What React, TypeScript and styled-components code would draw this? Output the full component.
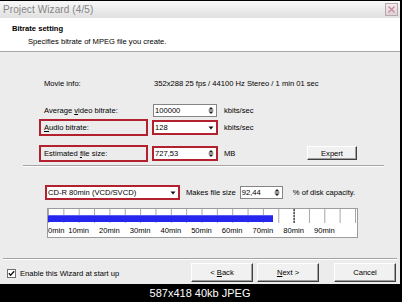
import React from 'react';
import styled, { createGlobalStyle } from 'styled-components';

const Global = createGlobalStyle`
  html, body { margin: 0; padding: 0; background: #000; }
  body {
    width: 402px;
    height: 302px;
    overflow: hidden;
    font-family: "Liberation Sans", Arial, sans-serif;
    font-size: 7.6px;
    color: #000;
  }
`;

const Page = styled.div`
  width: 402px;
  height: 302px;
  display: flex;
  flex-direction: column;
  background: #000;
`;

const Window = styled.div`
  width: 400px;
  height: 283px;
  margin-top: 1px;
  background: #ececec;
  display: flex;
  flex-direction: column;
  overflow: hidden;
`;

const TitleBar = styled.div`
  height: 17px;
  flex: none;
  display: flex;
  align-items: center;
  justify-content: space-between;
  padding: 0 2px 0 3px;
  background: linear-gradient(#f8f8f8, #e0e0e0);
  font-size: 10px;
  color: #858585;
  letter-spacing: 0.1px;
`;

const CloseBox = styled.div`
  width: 13px;
  height: 13px;
  display: flex;
`;

const Header = styled.div`
  height: 33px;
  flex: none;
  background: #fff;
  border-bottom: 1px solid #a6a6a6;
  padding: 0 0 0 12px;
  box-sizing: content-box;
  display: flex;
  flex-direction: column;
`;

const HeaderTitle = styled.div`
  font-weight: bold;
  line-height: 9px;
  margin-top: 6px;
`;

const HeaderSub = styled.div`
  line-height: 9px;
  margin-top: 4px;
  padding-left: 16px;
`;

const Body = styled.div`
  flex: 1;
  display: flex;
  flex-direction: column;
`;

const Row = styled.div<{ $mt: number }>`
  display: grid;
  grid-template-columns: 105px 71px 90px 50px;
  align-items: center;
  height: 13px;
  padding-left: 41px;
  margin-top: ${p => p.$mt}px;
`;

const Label = styled.div<{ $hl?: boolean }>`
  height: 13px;
  line-height: 13px;
  padding-left: 3px;
  outline: ${p => (p.$hl ? '2px solid #b3202e' : 'none')};
  white-space: nowrap;
`;

const InfoValue = styled.div`
  grid-column: 2 / span 3;
  padding-left: 8px;
  white-space: nowrap;
`;

const Field = styled.div<{ $w: number; $hl?: boolean }>`
  width: ${p => p.$w}px;
  height: 13px;
  box-sizing: border-box;
  border: 1px solid #858585;
  background: #fff;
  display: flex;
  align-items: center;
  justify-content: space-between;
  padding: 0 2px 0 1px;
  justify-self: end;
  outline: ${p => (p.$hl ? '2px solid #b3202e' : 'none')};
  outline-offset: ${p => (p.$hl ? '-1px' : '0')};
  white-space: nowrap;
`;

const Unit = styled.div`
  padding-left: 7px;
  white-space: nowrap;
`;

const Button = styled.div<{ $w: number; $h: number }>`
  width: ${p => p.$w}px;
  height: ${p => p.$h}px;
  box-sizing: border-box;
  background: #f1f1f1;
  border-top: 1px solid #ffffff;
  border-left: 1px solid #ffffff;
  border-right: 1px solid #404040;
  border-bottom: 1px solid #404040;
  box-shadow: inset -1px -1px 0 #a0a0a0;
  display: flex;
  align-items: center;
  justify-content: center;
  white-space: pre;
`;

const Etched = styled.div<{ $mt: number; $ml: number; $mr: number }>`
  height: 0;
  border-top: 1px solid #a3a3a3;
  border-bottom: 1px solid #ffffff;
  margin: ${p => p.$mt}px ${p => p.$mr}px 0 ${p => p.$ml}px;
`;

const DiskRow = styled.div`
  display: flex;
  align-items: center;
  height: 13px;
  margin-top: 19px;
  padding-left: 46px;
`;

const MakesLabel = styled.span`
  margin: 0 4px 0 7px;
  white-space: nowrap;
`;

const Percent = styled.span`
  margin-left: 10px;
  white-space: nowrap;
`;

const Timeline = styled.div`
  width: 311px;
  height: 30px;
  box-sizing: border-box;
  margin: 9px 0 0 47px;
  border: 1px solid #9c9c9c;
  background: #fff;
  display: flex;
  flex-direction: column;
`;

const Ruler = styled.svg`
  display: block;
  flex: none;
`;

const TickLabels = styled.div`
  position: relative;
  height: 13px;
`;

const TickLabel = styled.span<{ $first: boolean }>`
  position: absolute;
  top: 0;
  line-height: 13px;
  white-space: nowrap;
  transform: ${p => (p.$first ? 'none' : 'translateX(-50%)')};
`;

const Footer = styled.div`
  display: flex;
  align-items: center;
  margin-top: 3px;
  padding: 0 4px 0 7px;
`;

const Check = styled.div`
  width: 9px;
  height: 9px;
  box-sizing: border-box;
  border: 1px solid #6e6e6e;
  background: #fff;
  display: flex;
  align-items: center;
  justify-content: center;
  margin-top: 2px;
`;

const CheckText = styled.span`
  margin-left: 4px;
  margin-top: 2px;
  white-space: nowrap;
`;

const ButtonGroup = styled.div`
  margin-left: auto;
  display: flex;
  gap: 4px;
`;

const CancelWrap = styled.div`
  margin-left: 11px;
`;

const Caption = styled.div`
  flex: 1;
  width: 400px;
  color: #fff;
  font-size: 11px;
  line-height: 18px;
  text-align: center;
`;

const Spin = () => (
  <svg width="6" height="9" viewBox="0 0 6 9">
    <polygon points="0.5,3.5 3,1 5.5,3.5" fill="#222" />
    <line x1="0.5" y1="4.5" x2="5.5" y2="4.5" stroke="#999" strokeWidth="1" />
    <polygon points="0.5,5.5 3,8 5.5,5.5" fill="#222" />
  </svg>
);

const Drop = () => (
  <svg width="6" height="4" viewBox="0 0 6 4">
    <polygon points="0.5,0.5 5.5,0.5 3,3.5" fill="#111" />
  </svg>
);

const CloseIcon = () => (
  <svg width="13" height="13" viewBox="0 0 13 13">
    <defs>
      <linearGradient id="cg" x1="0" y1="0" x2="0" y2="1">
        <stop offset="0" stopColor="#f4eef0" />
        <stop offset="1" stopColor="#dcd0d4" />
      </linearGradient>
    </defs>
    <rect x="0.5" y="0.5" width="12" height="12" fill="url(#cg)" stroke="#b9a7ad" />
    <path d="M3.5 3.5 L9.5 9.5 M9.5 3.5 L3.5 9.5" stroke="#c88a9a" strokeWidth="1.4" />
  </svg>
);

const U = styled.span`
  text-decoration: underline;
`;

const STEP = 15.35;

export default function App() {
  const ticks = Array.from({ length: 21 }, (_, i) => i);
  const labels = Array.from({ length: 10 }, (_, i) => i);
  return (
    <Page>
      <Global />
      <Window>
        <TitleBar>
          <span>Project Wizard (4/5)</span>
          <CloseBox>
            <CloseIcon />
          </CloseBox>
        </TitleBar>
        <Header>
          <HeaderTitle>Bitrate setting</HeaderTitle>
          <HeaderSub>Specifies bitrate of MPEG file you create.</HeaderSub>
        </Header>
        <Body>
          <Row $mt={25}>
            <Label>Movie info:</Label>
            <InfoValue>352x288 25 fps / 44100 Hz Stereo / 1 min 01 sec</InfoValue>
          </Row>
          <Row $mt={14}>
            <Label>
              Average <U>v</U>ideo bitrate:
            </Label>
            <Field $w={64}>
              <span>100000</span>
              <Spin />
            </Field>
            <Unit>kbits/sec</Unit>
          </Row>
          <Row $mt={4}>
            <Label $hl>
              <U>A</U>udio bitrate:
            </Label>
            <Field $w={64} $hl>
              <span>128</span>
              <Drop />
            </Field>
            <Unit>kbits/sec</Unit>
          </Row>
          <Row $mt={12}>
            <Label $hl>
              Estimated <U>f</U>ile size:
            </Label>
            <Field $w={64} $hl>
              <span>727,53</span>
              <Spin />
            </Field>
            <Unit>MB</Unit>
            <Button $w={50} $h={14}>Expert</Button>
          </Row>
          <Etched $mt={6} $ml={23} $mr={16} />
          <DiskRow>
            <Field $w={133} $hl>
              <span>CD-R 80min (VCD/SVCD)</span>
              <Drop />
            </Field>
            <MakesLabel>Makes file size</MakesLabel>
            <Field $w={43}>
              <span>92,44</span>
              <Spin />
            </Field>
            <Percent>% of disk capacity.</Percent>
          </DiskRow>
          <Timeline>
            <Ruler width="309" height="15" viewBox="0 0 309 15">
              {ticks.map(i => (
                <line
                  key={i}
                  x1={i * STEP + 0.5}
                  y1="0"
                  x2={i * STEP + 0.5}
                  y2="14"
                  stroke="#a8a8a8"
                  strokeWidth="1"
                />
              ))}
              <rect x="0" y="6" width="225" height="7" fill="#2626ee" />
              <rect x="0" y="6" width="225" height="1" fill="#5a5af5" />
              <line
                x1={16 * STEP + 0.5}
                y1="0"
                x2={16 * STEP + 0.5}
                y2="16"
                stroke="#111"
                strokeWidth="1"
                strokeDasharray="2 1"
              />
            </Ruler>
            <TickLabels>
              {labels.map(i => (
                <TickLabel key={i} $first={i === 0} style={{ left: `${i * STEP * 2}px` }}>
                  {i * 10}min
                </TickLabel>
              ))}
            </TickLabels>
          </Timeline>
          <Etched $mt={20} $ml={3} $mr={3} />
          <Footer>
            <Check>
              <svg width="7" height="7" viewBox="0 0 7 7">
                <path d="M0.8 3.3 L2.6 5.2 L6.2 1.2" stroke="#111" strokeWidth="1.3" fill="none" />
              </svg>
            </Check>
            <CheckText>Enable this Wizard at start up</CheckText>
            <ButtonGroup>
              <Button $w={62} $h={19}>
                <span>
                  {'< '}
                  <U>B</U>ack
                </span>
              </Button>
              <Button $w={62} $h={19}>
                <span>
                  <U>N</U>
                  {'ext >'}
                </span>
              </Button>
              <CancelWrap>
                <Button $w={62} $h={19}>Cancel</Button>
              </CancelWrap>
            </ButtonGroup>
          </Footer>
        </Body>
      </Window>
      <Caption>587x418 40kb JPEG</Caption>
    </Page>
  );
}
